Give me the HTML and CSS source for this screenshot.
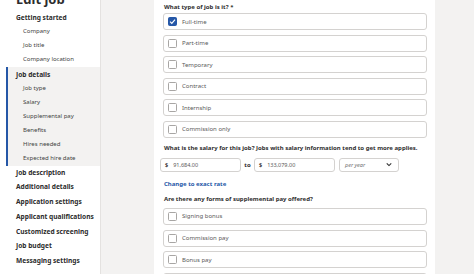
FILE: index.html
```html
<!DOCTYPE html>
<html>
<head>
	<title>Edit job</title>
	<link rel="stylesheet" href="styles.css">
</head>
<body>
<div class="page">
	<!-- left navigation -->
	<nav class="sidebar">
		<h1 class="title">Edit job</h1>
		<div class="group">
			<div class="head">Getting started</div>
			<div class="sub">Company</div>
			<div class="sub">Job title</div>
			<div class="sub">Company location</div>
		</div>
		<div class="group current">
			<div class="head">Job details</div>
			<div class="sub">Job type</div>
			<div class="sub">Salary</div>
			<div class="sub">Supplemental pay</div>
			<div class="sub">Benefits</div>
			<div class="sub">Hires needed</div>
			<div class="sub">Expected hire date</div>
		</div>
		<div class="top">Job description</div>
		<div class="top">Additional details</div>
		<div class="top">Application settings</div>
		<div class="top">Applicant qualifications</div>
		<div class="top">Customized screening</div>
		<div class="top">Job budget</div>
		<div class="top">Messaging settings</div>
	</nav>

	<!-- form panel -->
	<main class="panel">
		<div class="question">What type of job is it? *</div>
		<ul class="options">
			<li class="option"><span class="box checked"><svg viewBox="0 0 10 10" width="9" height="9"><path d="M2.3 5.2 L4.2 7 L7.8 3" fill="none" stroke="#fff" stroke-width="1.3"/></svg></span>Full-time</li>
			<li class="option"><span class="box"></span>Part-time</li>
			<li class="option"><span class="box"></span>Temporary</li>
			<li class="option"><span class="box"></span>Contract</li>
			<li class="option"><span class="box"></span>Internship</li>
			<li class="option"><span class="box"></span>Commission only</li>
		</ul>

		<div class="question q-salary">What is the salary for this job? Jobs with salary information tend to get more applies.</div>
		<div class="salary">
			<div class="field"><span class="cur">$</span>91,684.00</div>
			<span class="to">to</span>
			<div class="field"><span class="cur">$</span>133,079.00</div>
			<div class="select">per year
				<svg viewBox="0 0 8 6" width="6" height="5"><path d="M1 1.5 L4 4.5 L7 1.5" fill="none" stroke="#2d2d2d" stroke-width="1.4"/></svg>
			</div>
		</div>
		<a class="link">Change to exact rate</a>

		<div class="question q-supp">Are there any forms of supplemental pay offered?</div>
		<ul class="options">
			<li class="option"><span class="box"></span>Signing bonus</li>
			<li class="option"><span class="box"></span>Commission pay</li>
			<li class="option"><span class="box"></span>Bonus pay</li>
			<li class="option"><span class="box"></span>Tips</li>
		</ul>
	</main>
</div>
</body>
</html>
```

FILE: styles.css
```css
body {
	margin: 0;
	background: #f3f2f1;
	font-family: "Noto Sans", sans-serif;
	color: #2d2d2d;
	overflow: hidden;
}
.page {
	display: flex;
	height: 274px;
}

/* sidebar */
.sidebar {
	width: 100px;
	background: #fff;
	box-shadow: 1px 0 0 #e4e2e0;
	flex-shrink: 0;
}
.title {
	margin: -9px 0 3.5px 16px;
	font-size: 13px;
	line-height: 16px;
	font-weight: 700;
}
.head {
	padding-left: 16px;
	font-size: 6.6px;
	font-weight: 700;
	line-height: 13px;
}
.sub {
	padding-left: 23px;
	font-size: 6px;
	line-height: 14px;
	color: #424242;
	white-space: nowrap;
}
.group.current {
	margin: 1px 0 0 6px;
	padding: 1px 0 1px 0;
	background: #f3f2f1;
	border-left: 2px solid #2557a7;
}
.group.current .head {
	padding-left: 8px;
}
.group.current .sub {
	padding-left: 15px;
}
.top {
	padding-left: 16px;
	font-size: 6.6px;
	font-weight: 700;
	line-height: 14.8px;
	white-space: nowrap;
}

/* form panel */
.panel {
	margin-left: 54px;
	width: 265px;
	padding: 1px 8px 0 8px;
	background: #fff;
}
.question {
	font-size: 6px;
	font-weight: 700;
	line-height: 12px;
	padding-left: 2px;
	white-space: nowrap;
}
.options {
	list-style: none;
	margin: 0;
	padding: 0;
	display: flex;
	flex-direction: column;
	gap: 4.6px;
}
.option {
	display: flex;
	align-items: center;
	height: 17px;
	box-sizing: border-box;
	border: 1px solid #d4d2d0;
	border-radius: 3px;
	margin-left: 1px;
	padding-left: 4px;
	font-size: 6px;
	color: #595959;
}
.box {
	width: 9px;
	height: 9px;
	box-sizing: border-box;
	border: 1px solid #a8a6a4;
	border-radius: 1.5px;
	margin-right: 5px;
	display: flex;
}
.box.checked {
	background: #2557a7;
	border-color: #2557a7;
}
.box svg {
	margin: -1px;
}
.q-salary {
	margin-top: 4px;
}
.salary {
	display: flex;
	align-items: center;
	margin: 4px 0 0 -2px;
	height: 14px;
}
.field, .select {
	height: 14px;
	box-sizing: border-box;
	border: 1px solid #d4d2d0;
	border-radius: 3px;
	display: flex;
	align-items: center;
	font-size: 5.5px;
	color: #595959;
}
.field {
	width: 81px;
	padding-left: 4px;
}
.cur {
	font-weight: 700;
	color: #2d2d2d;
	margin-right: 5px;
}
.to {
	width: 13px;
	text-align: center;
	font-size: 6px;
	font-weight: 700;
}
.select {
	width: 60px;
	margin-left: 4px;
	padding: 0 6px 0 5px;
	justify-content: space-between;
	font-style: italic;
	color: #6f6f6f;
}
.link {
	display: block;
	margin-top: 6px;
	padding-left: 2px;
	font-size: 6px;
	font-weight: 700;
	line-height: 12px;
	color: #2557a7;
}
.q-supp {
	margin: 3px 0 3px 0;
}
```
